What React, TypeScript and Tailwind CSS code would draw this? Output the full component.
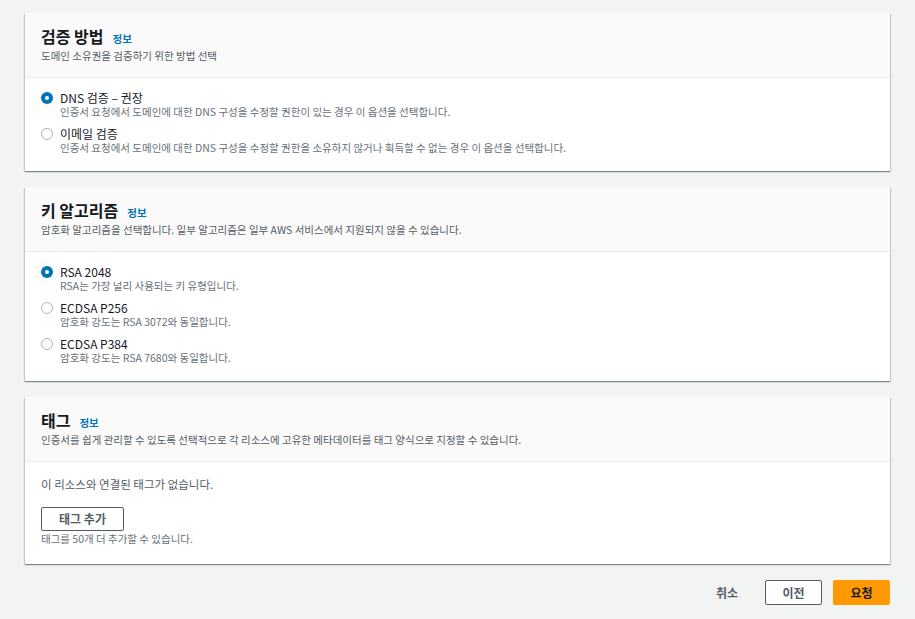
import React from "react"

const font = { fontFamily: '"Noto Sans CJK KR", "Noto Sans", sans-serif' }

type Option = { label: string; desc: string }

function Radio({ checked }: { checked: boolean }) {
  return checked ? (
    <span className="mt-[1px] flex h-[12px] w-[12px] shrink-0 items-center justify-center rounded-full bg-[#0073bb]">
      <span className="h-[4px] w-[4px] rounded-full bg-white" />
    </span>
  ) : (
    <span className="mt-[1px] h-[12px] w-[12px] shrink-0 rounded-full border border-[#aab7b8] bg-white" />
  )
}

function CardHeader({ title, desc }: { title: string; desc: string }) {
  return (
    <div className="border-b border-[#eaeded] bg-[#fafafa] px-[16px] pb-[13px] pt-[12px]">
      <div className="flex items-baseline gap-[9px]">
        <h2 className="text-[16px] font-bold leading-[22px] text-[#16191f]">{title}</h2>
        <a className="text-[10.5px] font-bold text-[#0073bb]">정보</a>
      </div>
      <p className="mt-[1px] text-[10.5px] leading-[16px] text-[#545b64]">{desc}</p>
    </div>
  )
}

function RadioGroup({ options, selected }: { options: Option[]; selected: number }) {
  return (
    <div className="flex flex-col gap-[9px] px-[16px] pb-[17px] pt-[13px]">
      {options.map((o, i) => (
        <div key={o.label} className="flex gap-[7px]">
          <Radio checked={i === selected} />
          <div>
            <div className="text-[12px] leading-[14px] text-[#16191f]">{o.label}</div>
            <div className="text-[10.5px] leading-[13px] text-[#687078]">{o.desc}</div>
          </div>
        </div>
      ))}
    </div>
  )
}

const card = "bg-white shadow-[0_1px_1px_0_rgba(0,28,36,0.3),1px_1px_1px_0_rgba(0,28,36,0.15),-1px_1px_1px_0_rgba(0,28,36,0.15)]"

export default function App() {
  const validation: Option[] = [
    { label: "DNS 검증 – 권장", desc: "인증서 요청에서 도메인에 대한 DNS 구성을 수정할 권한이 있는 경우 이 옵션을 선택합니다." },
    { label: "이메일 검증", desc: "인증서 요청에서 도메인에 대한 DNS 구성을 수정할 권한을 소유하지 않거나 획득할 수 없는 경우 이 옵션을 선택합니다." },
  ]
  const algorithms: Option[] = [
    { label: "RSA 2048", desc: "RSA는 가장 널리 사용되는 키 유형입니다." },
    { label: "ECDSA P256", desc: "암호화 강도는 RSA 3072와 동일합니다." },
    { label: "ECDSA P384", desc: "암호화 강도는 RSA 7680와 동일합니다." },
  ]

  return (
    <div style={font} className="min-h-[619px] bg-[#f2f3f3] px-[25px] pb-[15px] pt-[13px] text-[#16191f]">
      <div className="flex flex-col gap-[16px]">
        {/* Validation method */}
        <section className={card}>
          <CardHeader title="검증 방법" desc="도메인 소유권을 검증하기 위한 방법 선택" />
          <RadioGroup options={validation} selected={0} />
        </section>

        {/* Key algorithm */}
        <section className={card}>
          <CardHeader
            title="키 알고리즘"
            desc="암호화 알고리즘을 선택합니다. 일부 알고리즘은 일부 AWS 서비스에서 지원되지 않을 수 있습니다."
          />
          <RadioGroup options={algorithms} selected={0} />
        </section>

        {/* Tags */}
        <section className={card}>
          <CardHeader
            title="태그"
            desc="인증서를 쉽게 관리할 수 있도록 선택적으로 각 리소스에 고유한 메타데이터를 태그 양식으로 지정할 수 있습니다."
          />
          <div className="px-[16px] pb-[17px] pt-[14px]">
            <p className="text-[11.5px] leading-[16px] text-[#545b64]">이 리소스와 연결된 태그가 없습니다.</p>
            <button className="mt-[15px] h-[24px] w-[83px] rounded-[2px] border border-[#545b64] bg-white text-[12px] font-bold text-[#545b64]">
              태그 추가
            </button>
            <p className="text-[10.5px] leading-[16px] text-[#687078]">태그를 50개 더 추가할 수 있습니다.</p>
          </div>
        </section>

        {/* Actions */}
        <div className="flex items-center justify-end gap-[11px]">
          <button className="px-[16px] text-[12px] font-bold text-[#545b64]">취소</button>
          <button className="h-[25px] w-[57px] rounded-[2px] border border-[#545b64] bg-white text-[12px] font-bold text-[#545b64]">
            이전
          </button>
          <button className="h-[25px] w-[57px] rounded-[2px] bg-[#ff9900] text-[12px] font-bold text-[#16191f]">
            요청
          </button>
        </div>
      </div>
    </div>
  )
}
